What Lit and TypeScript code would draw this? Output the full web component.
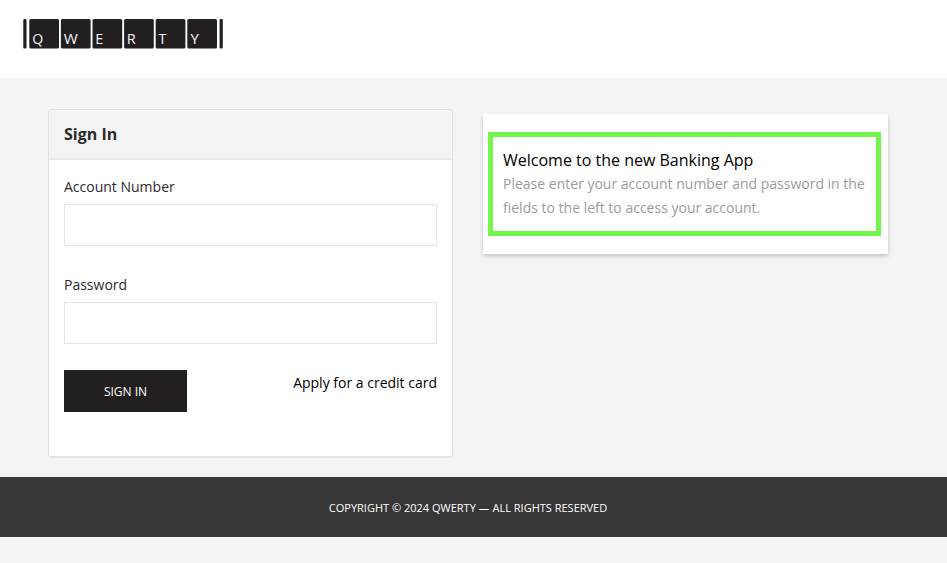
import { LitElement, html, svg, css } from "lit";
import { customElement } from "lit/decorators.js";

const KEYS = [
  { label: "Q", x: 9.2, width: 11 },
  { label: "W", x: 40.8, width: 14 },
  { label: "E", x: 72.3, width: 8 },
  { label: "R", x: 103.7, width: 9 },
  { label: "T", x: 135.6, width: 7.8 },
  { label: "Y", x: 167.5, width: 8.4 },
];

@customElement("key-logo")
class KeyLogo extends LitElement {
  static styles = css`
    :host { display: block; width: 200px; height: 30px; }
    svg { display: block; }
    .key { fill: #231f20; }
    .letter { fill: #f5f5f5; font: 14px "Open Sans", sans-serif; }
  `;

  render() {
    return html`<svg width="200" height="30" viewBox="0 0 200 30" role="img" aria-label="QWERTY">
      <rect class="key" x="0.3" y="0" width="3.2" height="29.4" rx="1"></rect>
      ${KEYS.map(
        (k, i) => svg`
          <rect class="key" x=${6.3 + i * 31.6} y="0" width="29.7" height="29.4" rx="1.5"></rect>
          <text class="letter" x=${k.x} y="25" textLength=${k.width} lengthAdjust="spacingAndGlyphs">${k.label}</text>`
      )}
      <rect class="key" x="196.6" y="0" width="3.2" height="29.4" rx="1"></rect>
    </svg>`;
  }
}

@customElement("app-root")
class AppRoot extends LitElement {
  static styles = css`
    :host {
      display: block;
      min-height: 563px;
      background: #f4f4f4;
      color: #2b2b2b;
      font-family: "Open Sans", "Noto Sans", sans-serif;
      font-size: 14px;
      line-height: 24px;
    }
    * { box-sizing: border-box; }
    h1, h2, p { margin: 0; }
    header { height: 78px; background: #fff; padding: 19px 23px; }
    main { display: flex; align-items: flex-start; gap: 30px; height: 399px; padding: 31px 0 0 48px; }
    .card {
      width: 405px;
      height: 349px;
      background: #fff;
      border: 1px solid #e0e0e0;
      border-bottom: 2px solid #e4e4e4;
      border-radius: 4px;
      overflow: hidden;
    }
    .head {
      height: 50px;
      padding: 12px 15px;
      background: #f4f4f4;
      border-bottom: 2px solid #e8e8e8;
      font-size: 16px;
      font-weight: 700;
    }
    .body { padding: 15px; }
    label { display: block; height: 29px; }
    input {
      display: block;
      width: 373px;
      height: 42px;
      margin-bottom: 27px;
      padding: 0 12px;
      border: 1px solid #e4e4e4;
      background: #fff;
      font: inherit;
      outline: none;
    }
    #password { margin-bottom: 26px; }
    .actions { display: flex; justify-content: space-between; align-items: flex-start; }
    button {
      width: 123px;
      height: 42px;
      padding: 0;
      border: 0;
      background: #231f20;
      color: #fff;
      font: 12px "Open Sans", sans-serif;
    }
    a { margin-top: 1px; color: #000; text-decoration: none; }
    .welcome {
      width: 405px;
      height: 140px;
      margin-top: 5px;
      padding: 18px 7px 0 5px;
      background: #fff;
      box-shadow: 0 2px 4px rgba(0, 0, 0, 0.2);
    }
    .notice { height: 104px; border: 5px solid #73f54b; padding: 11px 10px; color: #9c9c9c; white-space: nowrap; }
    .notice h2 { color: #000; font-size: 16px; font-weight: 400; }
    footer {
      height: 60px;
      background: #373737;
      color: #fff;
      font-size: 11px;
      line-height: 61px;
      text-align: center;
      padding-right: 11px;
    }
  `;

  render() {
    return html`
      <header><key-logo></key-logo></header>
      <main>
        <section class="card">
          <h1 class="head">Sign In</h1>
          <form class="body">
            <label for="account">Account Number</label>
            <input id="account" type="text" />
            <label for="password">Password</label>
            <input id="password" type="password" />
            <div class="actions">
              <button type="button">SIGN IN</button>
              <a href="#">Apply for a credit card</a>
            </div>
          </form>
        </section>
        <aside class="welcome">
          <div class="notice">
            <h2>Welcome to the new Banking App</h2>
            <p>Please enter your account number and password in the<br />fields to the left to access your account.</p>
          </div>
        </aside>
      </main>
      <footer>COPYRIGHT © 2024 QWERTY — ALL RIGHTS RESERVED</footer>
    `;
  }
}
